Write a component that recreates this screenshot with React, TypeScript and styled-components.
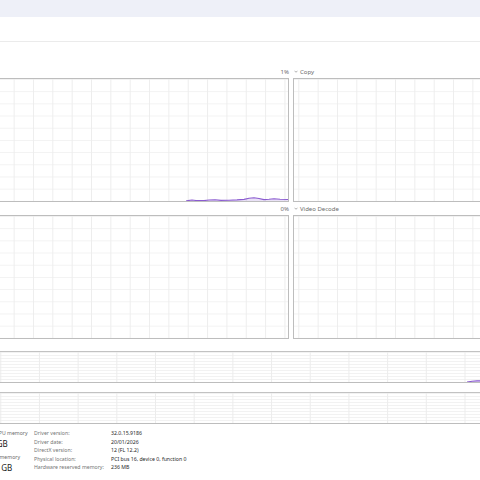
import React from "react";
import styled, { createGlobalStyle } from "styled-components";

const GlobalStyle = createGlobalStyle`
  html, body { margin: 0; padding: 0; background: #ffffff; }
  body { font-family: "Noto Sans", "Open Sans", sans-serif; }
  * { box-sizing: border-box; }
`;

const Page = styled.div`
  width: 480px;
  height: 480px;
  overflow: hidden;
  background: #ffffff;
  display: flex;
  flex-direction: column;
`;

const TopBar = styled.div`
  flex: none;
  height: 17px;
  background: #eef0f8;
`;

const TitleArea = styled.div`
  flex: none;
  height: 25px;
  border-bottom: 1px solid #ebebeb;
`;

const Content = styled.div`
  flex: none;
  margin-left: -160px;
  width: 902px;
  padding-top: 23px;
  display: flex;
  flex-direction: column;
`;

const EngineGrid = styled.div`
  display: grid;
  grid-template-columns: 449px 449px;
  column-gap: 4px;
`;

const EngineCell = styled.div`
  display: flex;
  flex-direction: column;
`;

const GraphHeader = styled.div<{ $h: number }>`
  height: ${(p) => p.$h}px;
  display: flex;
  align-items: center;
  justify-content: space-between;
  font-size: 6px;
  line-height: 6px;
  color: #6b6b6b;
  white-space: nowrap;
`;

const EngineName = styled.span`
  display: flex;
  align-items: center;
  gap: 2px;
  padding-left: 1px;
`;

const Percent = styled.span`
  color: #6b6b6b;
`;

const EngineGraph = styled.div<{ $phase: number }>`
  height: 124px;
  border: 1px solid #bdbdbd;
  background-color: #ffffff;
  background-image: linear-gradient(to right, #ededed 1px, transparent 1px),
    linear-gradient(to bottom, #f2f2f2 1px, transparent 1px);
  background-size: 19.35px 100%, 100% 12.2px;
  background-position: ${(p) => p.$phase}px 0, 0 0;
  overflow: hidden;
`;

const WideGraph = styled.div`
  height: 32px;
  border-top: 1px solid #c2c2c2;
  border-bottom: 1px solid #bdbdbd;
  background-color: #ffffff;
  background-image: linear-gradient(to right, #ececec 1px, transparent 1px),
    linear-gradient(to bottom, #f2f2f2 1px, transparent 1px);
  background-size: 38.7px 100%, 100% 3px;
  background-position: 5.5px 0, 0 0;
  overflow: hidden;
`;

const Plot = styled.svg`
  display: block;
  width: 100%;
  height: 100%;
`;

const InfoRow = styled.div`
  display: flex;
  padding-top: 5px;
`;

const StatsGrid = styled.div`
  display: grid;
  grid-template-columns: 121px 60px;
  column-gap: 8px;
  row-gap: 2px;
  white-space: nowrap;
`;

const StatCell = styled.div`
  display: flex;
  flex-direction: column;
`;

const StatLabel = styled.div`
  font-size: 5.2px;
  line-height: 8px;
  color: #6a6a6a;
`;

const StatValue = styled.div`
  font-size: 8px;
  line-height: 14px;
  color: #1a1a1a;
`;

const DriverGrid = styled.div`
  margin-left: 5px;
  display: grid;
  grid-template-columns: 77px auto;
  grid-auto-rows: 8.6px;
  align-items: center;
  font-size: 5.2px;
  line-height: 8.6px;
  white-space: nowrap;
`;

const DriverLabel = styled.div`
  color: #747474;
`;

const DriverValue = styled.div`
  color: #1f1f1f;
`;

const Chevron = () => (
  <svg width="4" height="3" viewBox="0 0 8 6">
    <path d="M1 1.5l3 3 3-3" stroke="#7a7a7a" strokeWidth="1.2" fill="none" />
  </svg>
);

type Pt = [number, number];

const LineChart: React.FC<{ w: number; h: number; pts: Pt[] }> = ({ w, h, pts }) => {
  if (pts.length === 0) return <Plot viewBox={`0 0 ${w} ${h}`} preserveAspectRatio="none" />;
  const line = pts.map((p, i) => `${i === 0 ? "M" : "L"}${p[0]} ${p[1]}`).join(" ");
  const area = `${line} L${pts[pts.length - 1][0]} ${h} L${pts[0][0]} ${h} Z`;
  return (
    <Plot viewBox={`0 0 ${w} ${h}`} preserveAspectRatio="none">
      <path d={area} fill="rgba(139,92,208,0.18)" />
      <path d={line} fill="none" stroke="#8b5cd0" strokeWidth="1.1" />
    </Plot>
  );
};

// page-coordinate points converted to the plot's own coordinates
const toPlot = (pts: Pt[], dx: number, dy: number): Pt[] => pts.map(([x, y]) => [x + dx, y + dy]);

const threeD: Pt[] = toPlot(
  [
    [186, 201],
    [188, 200.6],
    [192, 200.0],
    [196, 200.5],
    [204, 200.6],
    [209, 200.0],
    [215, 199.8],
    [221, 200.4],
    [229, 200.2],
    [237, 199.9],
    [244, 199.4],
    [249, 198.3],
    [254, 197.8],
    [259, 198.5],
    [264, 199.6],
    [269, 199.3],
    [274, 198.8],
    [280, 199.3],
    [289, 199.6],
  ],
  159,
  -79
);

const dedicated: Pt[] = toPlot(
  [
    [468, 382],
    [473, 381.3],
    [478, 380.9],
    [486, 380.7],
    [520, 380.8],
    [741, 380.8],
  ],
  159,
  -352
);

const engines = [
  { name: "3D", pct: "1%", phase: 17.9, pts: threeD },
  { name: "Copy", pct: "0%", phase: 4.3, pts: [] as Pt[] },
  { name: "Video Encode", pct: "0%", phase: 17.9, pts: [] as Pt[] },
  { name: "Video Decode", pct: "0%", phase: 4.3, pts: [] as Pt[] },
];

const drivers: [string, string][] = [
  ["Driver version:", "32.0.15.9186"],
  ["Driver date:", "20/01/2026"],
  ["DirectX version:", "12 (FL 12.2)"],
  ["Physical location:", "PCI bus 16, device 0, function 0"],
  ["Hardware reserved memory:", "236 MB"],
];

const stats: [string, string][] = [
  ["Utilisation", "1%"],
  ["Dedicated GPU memory", "0.5/8.0 GB"],
  ["GPU Memory", "0.6/23.9 GB"],
  ["Shared GPU memory", "0.1/15.9 GB"],
];

export default function App() {
  return (
    <>
      <GlobalStyle />
      <Page>
        <TopBar />
        <TitleArea />
        <Content>
          <EngineGrid>
            {engines.map((e) => (
              <EngineCell key={e.name}>
                <GraphHeader $h={13}>
                  <EngineName>
                    <Chevron />
                    {e.name}
                  </EngineName>
                  <Percent>{e.pct}</Percent>
                </GraphHeader>
                <EngineGraph $phase={e.phase}>
                  <LineChart w={447} h={122} pts={e.pts} />
                </EngineGraph>
              </EngineCell>
            ))}
          </EngineGrid>
          <GraphHeader $h={12}>
            <span>Dedicated GPU memory usage</span>
            <span>8.0 GB</span>
          </GraphHeader>
          <WideGraph>
            <LineChart w={902} h={30} pts={dedicated} />
          </WideGraph>
          <GraphHeader $h={9}>
            <span>Shared GPU memory usage</span>
            <span>15.9 GB</span>
          </GraphHeader>
          <WideGraph>
            <LineChart w={902} h={30} pts={[]} />
          </WideGraph>
          <InfoRow>
            <StatsGrid>
              {stats.map(([l, v]) => (
                <StatCell key={l}>
                  <StatLabel>{l}</StatLabel>
                  <StatValue>{v}</StatValue>
                </StatCell>
              ))}
            </StatsGrid>
            <DriverGrid>
              {drivers.map(([l, v]) => (
                <React.Fragment key={l}>
                  <DriverLabel>{l}</DriverLabel>
                  <DriverValue>{v}</DriverValue>
                </React.Fragment>
              ))}
            </DriverGrid>
          </InfoRow>
        </Content>
      </Page>
    </>
  );
}
